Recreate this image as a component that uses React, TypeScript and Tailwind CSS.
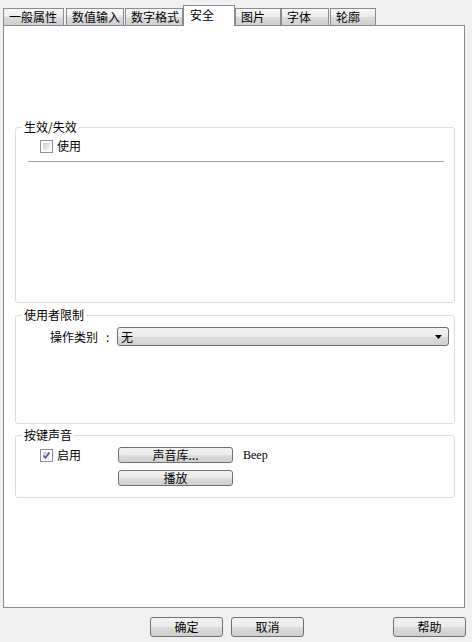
import React from 'react';

const font = '[font-family:Noto_Sans_CJK_SC,sans-serif]';

const tabs = [
    { label: '一般属性', w: 'w-[61px]', ml: 'ml-0' },
    { label: '数值输入', w: 'w-[58px]', ml: 'ml-[2px]' },
    { label: '数字格式', w: 'w-[58px]', ml: 'ml-[1px]' },
    { label: '安全', w: 'w-[52px]', ml: 'ml-0', active: true },
    { label: '图片', w: 'w-[46px]', ml: 'ml-0' },
    { label: '字体', w: 'w-[48px]', ml: 'ml-[0px]' },
    { label: '轮廓', w: 'w-[46px]', ml: 'ml-[1px]' },
];

const btnBg =
    'bg-[linear-gradient(to_bottom,#f2f2f2_0%,#ebebeb_50%,#dddddd_51%,#cfcfcf_100%)]';

const Button: React.FC<{ label: string; className?: string }> = ({ label, className }) => (
    <div
        className={`flex items-center justify-center border border-[#707070] rounded-[3px] ${btnBg} text-[12px] leading-none text-black ${className ?? ''}`}
    >
        {label}
    </div>
);

const Checkbox: React.FC<{ checked?: boolean }> = ({ checked }) => (
    <div className="w-[13px] h-[13px] border border-[#8e8f8f] bg-white p-[2px]">
        <div className="w-full h-full bg-[linear-gradient(135deg,#cbcfd5,#f6f6f6)] relative">
            {checked && (
                <svg viewBox="0 0 9 9" className="absolute -left-[1px] -top-[1px] w-[9px] h-[9px]">
                    <path d="M1.5 4.5 L3.5 6.8 L7.5 1.5" stroke="#4a5f97" strokeWidth="1.6" fill="none" />
                </svg>
            )}
        </div>
    </div>
);

const Group: React.FC<{ title: string; h: string; children?: React.ReactNode; className?: string }> = ({
    title,
    h,
    children,
    className,
}) => (
    <fieldset className={`w-[440px] ${h} border border-[#d5dfe5] rounded-[3px] px-0 pb-0 ${className ?? ''}`}>
        <legend className="ml-[6px] px-[2px] text-[12px] leading-[16px] text-black">{title}</legend>
        {children}
    </fieldset>
);

export default function App() {
    return (
        <div className={`w-[472px] h-[642px] bg-[#f0f0f0] pt-[5px] ${font} text-black overflow-hidden`}>
            {/* tabs */}
            <div className="flex items-end h-[20px] pl-[3px]">
                {tabs.map((t) =>
                    t.active ? (
                        <div
                            key={t.label}
                            className={`${t.w} ${t.ml} h-[21px] -mb-px relative z-10 bg-white border border-b-0 border-[#898c95] text-[12px] leading-none pl-[6px] pt-[3px]`}
                        >
                            {t.label}
                        </div>
                    ) : (
                        <div
                            key={t.label}
                            className={`${t.w} ${t.ml} h-[17px] border border-b-0 border-[#898c95] bg-[linear-gradient(to_bottom,#f7f7f7_0%,#ececec_50%,#dcdcdc_51%,#cfcfcf_100%)] text-[12px] leading-none pl-[5px] pt-[2px]`}
                        >
                            {t.label}
                        </div>
                    )
                )}
            </div>

            {/* panel */}
            <div className="ml-[3px] w-[462px] h-[583px] bg-white border border-[#898c95] pt-[93px] pl-[11px] flex flex-col">
                <Group title="生效/失效" h="h-[184px]">
                    <div className="flex items-center mt-[4px] ml-[24px] h-[14px]">
                        <Checkbox />
                        <span className="ml-[4px] text-[12px] leading-none">使用</span>
                    </div>
                    <div className="mt-[8px] ml-[12px] w-[416px] h-px bg-[#a0a0a0]" />
                </Group>

                <Group title="使用者限制" h="h-[117px]" className="mt-[4px]">
                    <div className="flex items-center mt-[4px]">
                        <span className="ml-[34px] w-[67px] text-[12px] leading-none">
                            操作类别<span className="ml-[8px]">:</span>
                        </span>
                        <div
                            className={`w-[332px] h-[19px] border border-[#707070] rounded-[3px] ${btnBg} flex items-center justify-between pl-[3px] pr-[6px]`}
                        >
                            <span className="text-[12px] leading-none">无</span>
                            <svg viewBox="0 0 7 4" className="w-[7px] h-[4px]">
                                <path d="M0 0 H7 L3.5 4 Z" fill="#000" />
                            </svg>
                        </div>
                    </div>
                </Group>

                <Group title="按键声音" h="h-[71px]" className="mt-[3px]">
                    <div className="flex items-center mt-[4px] h-[16px]">
                        <div className="ml-[24px]">
                            <Checkbox checked />
                        </div>
                        <span className="ml-[4px] text-[12px] leading-none">启用</span>
                        <Button label="声音库..." className="ml-[37px] w-[115px] h-[16px]" />
                        <span className="ml-[10px] text-[12px] leading-none [font-family:Liberation_Serif,serif]">
                            Beep
                        </span>
                    </div>
                    <div className="flex mt-[7px]">
                        <Button label="播放" className="ml-[102px] w-[115px] h-[16px]" />
                    </div>
                </Group>
            </div>

            {/* bottom buttons */}
            <div className="flex mt-[9px]">
                <Button label="确定" className="ml-[150px] w-[73px] h-[20px]" />
                <Button label="取消" className="ml-[8px] w-[73px] h-[20px]" />
                <Button label="帮助" className="ml-[89px] w-[73px] h-[20px]" />
            </div>
        </div>
    );
}
